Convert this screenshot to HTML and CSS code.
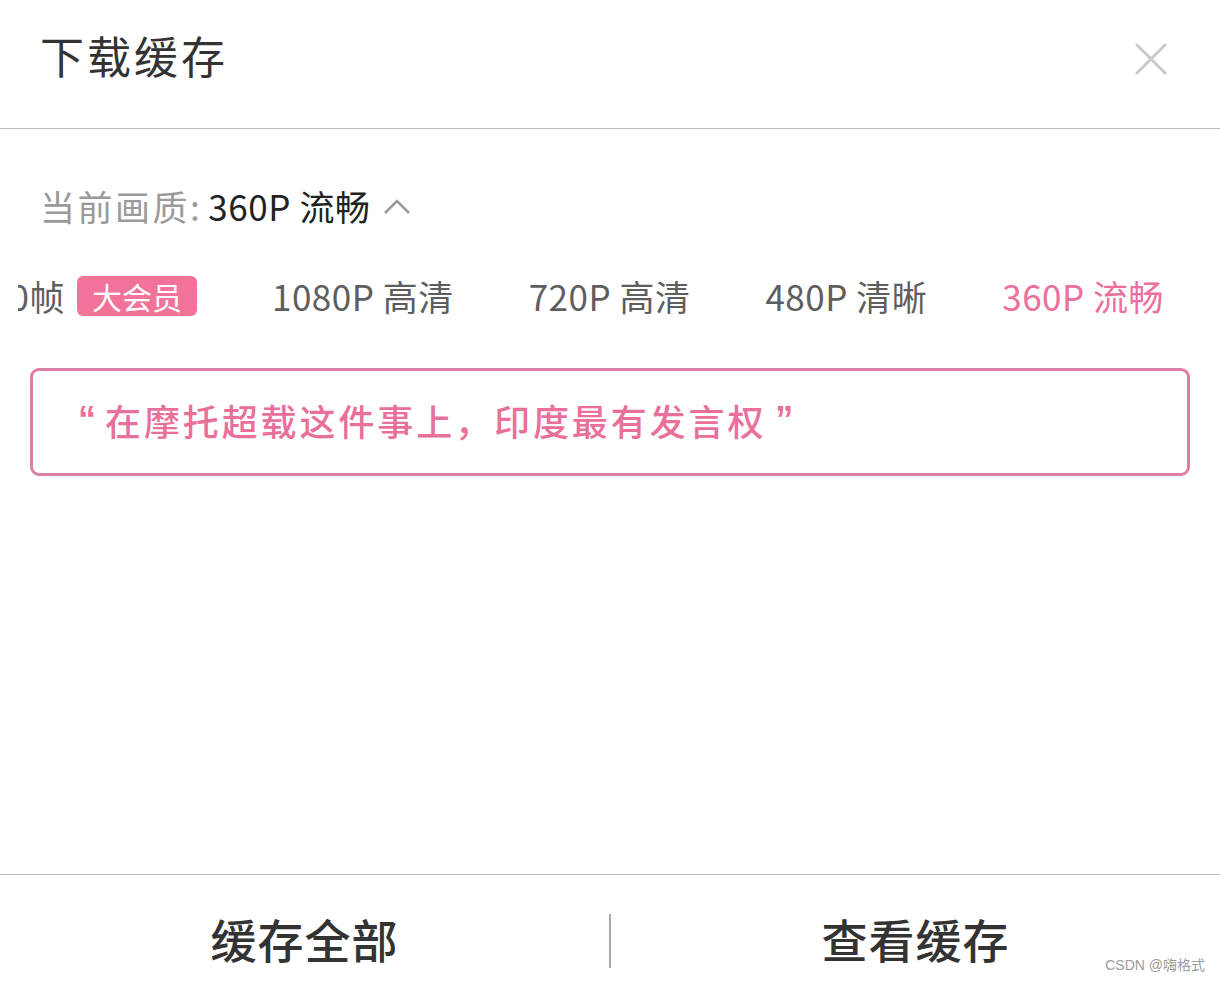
FILE: index.html
```html
<!DOCTYPE html>
<html lang="zh-CN">
<head>
<meta charset="utf-8">
<title>下载缓存</title>
<link rel="stylesheet" href="styles.css">
</head>
<body>
<div class="sheet">
  <header class="header">
    <h1 class="title">下载缓存</h1>
    <button class="close" aria-label="关闭">
      <svg width="32" height="32" viewBox="0 0 32 32"><path d="M2 2 L30 30 M30 2 L2 30" stroke="#c9c9c9" stroke-width="3" fill="none" stroke-linecap="round"/></svg>
    </button>
  </header>
  <main class="main">
    <div class="current">
      <span class="current-label">当前画质:</span>
      <span class="current-value">360P 流畅</span>
      <svg class="chevron" width="26" height="16" viewBox="0 0 26 16"><path d="M1 14 L13 2 L25 14" stroke="#9a9a9a" stroke-width="2.6" fill="none"/></svg>
    </div>
    <div class="quality-viewport">
      <div class="quality-track">
        <div class="q-item">1080P 60帧<span class="badge">大会员</span></div>
        <div class="q-item">1080P 高清</div>
        <div class="q-item">720P 高清</div>
        <div class="q-item">480P 清晰</div>
        <div class="q-item active">360P 流畅</div>
      </div>
    </div>
    <div class="notice"><span class="quote">“</span>在摩托超载这件事上，印度最有发言权<span class="quote end">”</span></div>
  </main>
  <footer class="footer">
    <button class="action">缓存全部</button>
    <span class="divider"></span>
    <button class="action">查看缓存</button>
    <span class="watermark">CSDN @嗨格式</span>
  </footer>
</div>
</body>
</html>
```

FILE: styles.css
```css
* { box-sizing: border-box; }
html, body { margin: 0; padding: 0; background: #fff; }
body {
  font-family: "Noto Sans CJK SC", "Noto Sans", sans-serif;
  color: #333;
}
.sheet {
  position: relative;
  height: 982px;
  display: flex;
  flex-direction: column;
}
.header {
  height: 129px;
  border-bottom: 1.5px solid #bdbdbd;
  display: flex;
  align-items: center;
  justify-content: space-between;
  padding: 0 53px 18px 40px;
  flex: none;
}
.title {
  margin: 0;
  font-size: 44px;
  font-weight: 400;
  letter-spacing: 3px;
  line-height: 50px;
  color: #333;
}
.close {
  border: 0;
  background: none;
  padding: 0;
  width: 32px;
  height: 32px;
  margin-top: 8px;
  display: flex;
}
.main {
  flex: 1;
  display: flex;
  flex-direction: column;
}
.current {
  display: flex;
  align-items: center;
  margin: 57px 0 0 40px;
  height: 40px;
  font-size: 35px;
  line-height: 40px;
}
.current-label {
  color: #9a9a9a;
  letter-spacing: 2.5px;
  margin-right: 6px;
}
.current-value { color: #222; letter-spacing: 0.6px; }
.chevron { margin-left: 13px; margin-top: 2px; }
.quality-viewport {
  margin: 50px 0 0 18px;
  overflow: hidden;
  height: 40px;
}
.quality-track {
  display: flex;
  justify-content: flex-end;
  gap: 75px;
  padding-right: 56px;
  white-space: nowrap;
}
.q-item {
  flex: none;
  display: flex;
  align-items: center;
  font-size: 35px;
  line-height: 40px;
  color: #5e5e5e;
  letter-spacing: 0.5px;
}
.q-item.active { color: #ec6f9d; }
.badge {
  margin-left: 12px;
  background: #f27399;
  color: #fff;
  border-radius: 6px;
  height: 40px;
  padding: 0 15px;
  font-size: 30px;
  line-height: 40px;
  letter-spacing: 0;
}
.notice {
  margin: 52px 30px 0;
  height: 108px;
  border: 3px solid #dd7ea3;
  border-radius: 9px;
  display: flex;
  align-items: center;
  padding: 0 0 4px 45px;
  font-size: 36px;
  font-weight: 500;
  letter-spacing: 2.9px;
  color: #e9709b;
}
.quote {
  font-family: "Liberation Sans", sans-serif;
  font-weight: 700;
  letter-spacing: 0;
  margin-right: 9px;
}
.quote.end { margin: 0 0 0 9px; }
.footer {
  flex: none;
  height: 108px;
  border-top: 1.5px solid #bdbdbd;
  display: flex;
  align-items: center;
  padding: 38px 0 14px;
}
.action {
  flex: 1;
  border: 0;
  background: none;
  padding: 0 0 6px;
  font-family: inherit;
  font-size: 46px;
  font-weight: 500;
  letter-spacing: 1px;
  line-height: 54px;
  color: #333;
}
.divider {
  width: 2px;
  height: 54px;
  background: #a8a8a8;
  flex: none;
}
.watermark {
  position: absolute;
  right: 15px;
  bottom: 8px;
  font-family: "Liberation Sans", "Noto Sans CJK SC", sans-serif;
  font-size: 14px;
  color: #9b9b9b;
}
```
